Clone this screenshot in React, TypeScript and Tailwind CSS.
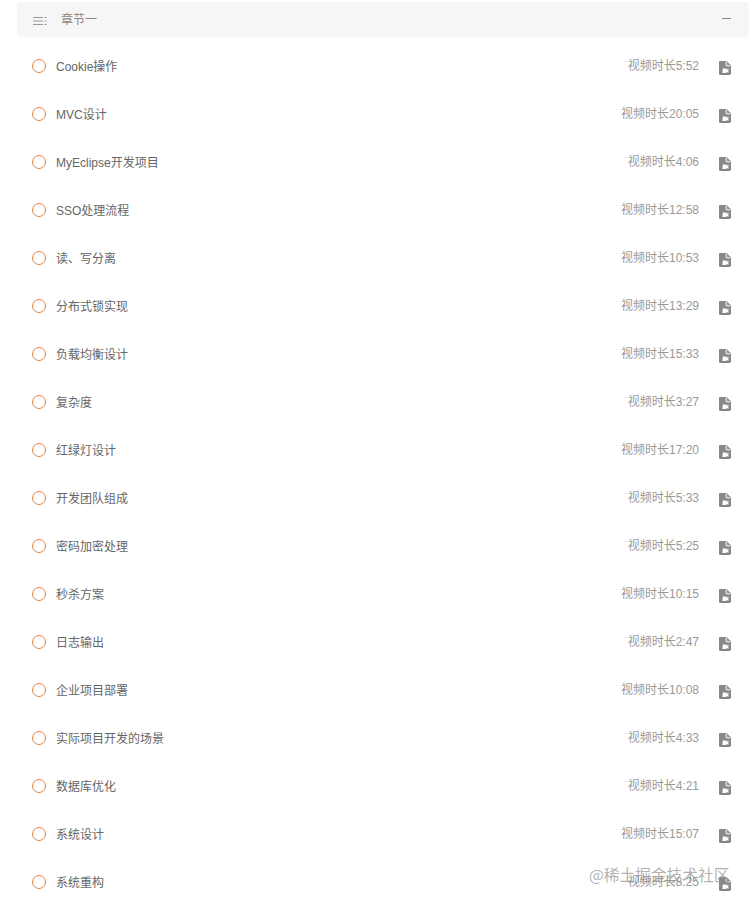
import React from "react";

interface Lesson {
  title: string;
  duration: string;
}

const lessons: Lesson[] = [
  { title: "Cookie操作", duration: "5:52" },
  { title: "MVC设计", duration: "20:05" },
  { title: "MyEclipse开发项目", duration: "4:06" },
  { title: "SSO处理流程", duration: "12:58" },
  { title: "读、写分离", duration: "10:53" },
  { title: "分布式锁实现", duration: "13:29" },
  { title: "负载均衡设计", duration: "15:33" },
  { title: "复杂度", duration: "3:27" },
  { title: "红绿灯设计", duration: "17:20" },
  { title: "开发团队组成", duration: "5:33" },
  { title: "密码加密处理", duration: "5:25" },
  { title: "秒杀方案", duration: "10:15" },
  { title: "日志输出", duration: "2:47" },
  { title: "企业项目部署", duration: "10:08" },
  { title: "实际项目开发的场景", duration: "4:33" },
  { title: "数据库优化", duration: "4:21" },
  { title: "系统设计", duration: "15:07" },
  { title: "系统重构", duration: "8:25" },
];

function MenuIcon() {
  return (
    <svg width="14" height="8" viewBox="0 0 14 8" className="mt-[3px] text-[#999]" fill="currentColor">
      <rect x="0" y="0" width="10" height="1" />
      <rect x="0" y="3.5" width="10" height="1" />
      <rect x="0" y="7" width="10" height="1" />
      <rect x="11.5" y="0" width="2" height="1" />
      <rect x="11.5" y="3.5" width="2" height="1" />
      <rect x="11.5" y="7" width="2" height="1" />
    </svg>
  );
}

function VideoFileIcon() {
  return (
    <svg width="12" height="14" viewBox="0 0 12 14" className="text-[#888]">
      <path
        d="M1.2 0H7.6L12 4.4V12.8C12 13.5 11.5 14 10.8 14H1.2C.5 14 0 13.5 0 12.8V1.2C0 .5.5 0 1.2 0Z"
        fill="currentColor"
      />
      <path d="M7.2.6V4.8H11.4" fill="none" stroke="#fff" strokeWidth="1" />
      <path d="M3.6 7.6H7.4V8.8L9.4 7.6V12L7.4 10.8V12H3.6Z" fill="#fff" />
    </svg>
  );
}

export default function App() {
  return (
    <div className="relative h-[907px] overflow-hidden bg-white pt-0.5 pl-[17px] pr-[5px] font-['Liberation_Sans','Noto_Sans_CJK_SC',sans-serif] text-xs">
      <div className="mb-[5px] flex h-[35px] items-center rounded-sm bg-[#f6f6f6] pl-4 pr-[18px] text-[#888]">
        <MenuIcon />
        <span className="ml-3.5 mt-px flex-1">章节一</span>
        <span className="mb-0.5 h-px w-[9px] bg-[#888]" />
      </div>

      {lessons.map((lesson) => (
        <div key={lesson.title} className="flex h-12 items-center pl-[15px] pr-[18px]">
          <span className="h-[14px] w-[14px] rounded-full border-[1.5px] border-[#e8833a]" />
          <span className="ml-[10px] mt-0.5 flex-1 text-[#666]">{lesson.title}</span>
          <span className="text-[#999]">视频时长{lesson.duration}</span>
          <span className="ml-5 mt-1 flex">
            <VideoFileIcon />
          </span>
        </div>
      ))}

      <div className="absolute left-[589px] top-[864px] font-['Noto_Sans_CJK_SC',sans-serif] text-[15.7px] leading-[22px] text-[#8f8f8f]/70">
        @稀土掘金技术社区
      </div>
    </div>
  );
}
